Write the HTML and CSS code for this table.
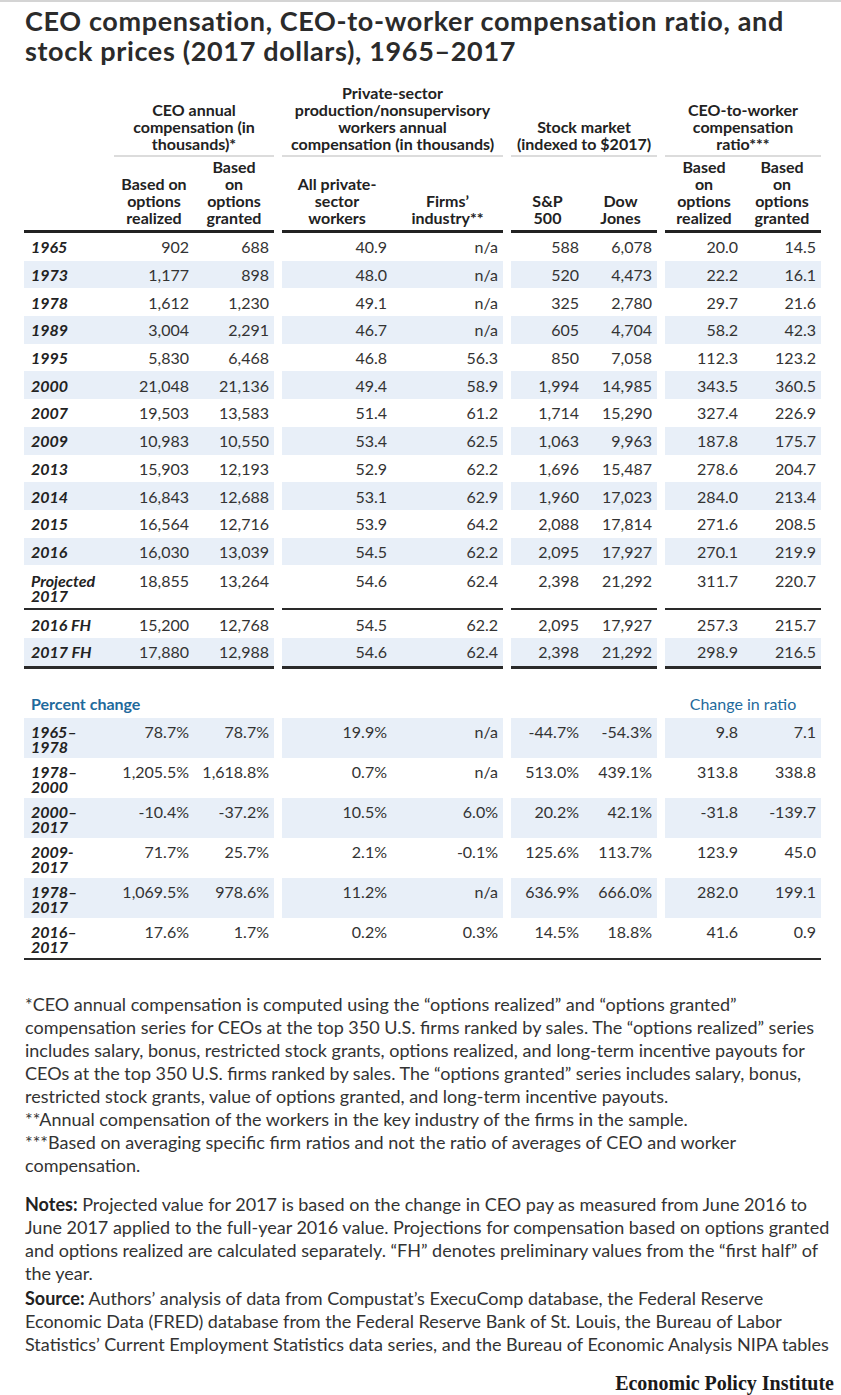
FILE: index.html
```html
<!DOCTYPE html>
<html lang="en">
<head>
<meta charset="utf-8">
<title>CEO compensation</title>
<link rel="stylesheet" href="styles.css">
</head>
<body>
<div class="page">
  <h1 class="title">CEO compensation, CEO-to-worker compensation ratio, and stock prices (2017 dollars), 1965–2017</h1>

  <table class="data">
    <colgroup>
      <col class="c-year"><col class="c-g1"><col class="c-g1">
      <col class="c-sp"><col class="c-g2a"><col class="c-g2b">
      <col class="c-sp"><col class="c-g3"><col class="c-g3">
      <col class="c-sp"><col class="c-g4"><col class="c-g4">
    </colgroup>
    <thead>
      <tr class="grp">
        <th class="blank"></th>
        <th colspan="2">CEO annual<br>compensation (in<br>thousands)*</th>
        <th class="sp"></th>
        <th colspan="2">Private-sector<br>production/nonsupervisory<br>workers annual<br>compensation (in thousands)</th>
        <th class="sp"></th>
        <th colspan="2">Stock market<br>(indexed to $2017)</th>
        <th class="sp"></th>
        <th colspan="2">CEO-to-worker<br>compensation<br>ratio***</th>
      </tr>
      <tr class="sub">
        <th></th>
        <th>Based on<br>options<br>realized</th>
        <th>Based<br>on<br>options<br>granted</th>
        <th class="sp"></th>
        <th>All private-<br>sector<br>workers</th>
        <th>Firms’<br>industry**</th>
        <th class="sp"></th>
        <th>S&amp;P<br>500</th>
        <th>Dow<br>Jones</th>
        <th class="sp"></th>
        <th>Based<br>on<br>options<br>realized</th>
        <th>Based<br>on<br>options<br>granted</th>
      </tr>
    </thead>
    <tbody class="main">
      <tr><td class="yr">1965</td><td>902</td><td>688</td><td class="sp"></td><td>40.9</td><td>n/a</td><td class="sp"></td><td>588</td><td>6,078</td><td class="sp"></td><td>20.0</td><td>14.5</td></tr>
      <tr class="alt"><td class="yr">1973</td><td>1,177</td><td>898</td><td class="sp"></td><td>48.0</td><td>n/a</td><td class="sp"></td><td>520</td><td>4,473</td><td class="sp"></td><td>22.2</td><td>16.1</td></tr>
      <tr><td class="yr">1978</td><td>1,612</td><td>1,230</td><td class="sp"></td><td>49.1</td><td>n/a</td><td class="sp"></td><td>325</td><td>2,780</td><td class="sp"></td><td>29.7</td><td>21.6</td></tr>
      <tr class="alt"><td class="yr">1989</td><td>3,004</td><td>2,291</td><td class="sp"></td><td>46.7</td><td>n/a</td><td class="sp"></td><td>605</td><td>4,704</td><td class="sp"></td><td>58.2</td><td>42.3</td></tr>
      <tr><td class="yr">1995</td><td>5,830</td><td>6,468</td><td class="sp"></td><td>46.8</td><td>56.3</td><td class="sp"></td><td>850</td><td>7,058</td><td class="sp"></td><td>112.3</td><td>123.2</td></tr>
      <tr class="alt"><td class="yr">2000</td><td>21,048</td><td>21,136</td><td class="sp"></td><td>49.4</td><td>58.9</td><td class="sp"></td><td>1,994</td><td>14,985</td><td class="sp"></td><td>343.5</td><td>360.5</td></tr>
      <tr><td class="yr">2007</td><td>19,503</td><td>13,583</td><td class="sp"></td><td>51.4</td><td>61.2</td><td class="sp"></td><td>1,714</td><td>15,290</td><td class="sp"></td><td>327.4</td><td>226.9</td></tr>
      <tr class="alt"><td class="yr">2009</td><td>10,983</td><td>10,550</td><td class="sp"></td><td>53.4</td><td>62.5</td><td class="sp"></td><td>1,063</td><td>9,963</td><td class="sp"></td><td>187.8</td><td>175.7</td></tr>
      <tr><td class="yr">2013</td><td>15,903</td><td>12,193</td><td class="sp"></td><td>52.9</td><td>62.2</td><td class="sp"></td><td>1,696</td><td>15,487</td><td class="sp"></td><td>278.6</td><td>204.7</td></tr>
      <tr class="alt"><td class="yr">2014</td><td>16,843</td><td>12,688</td><td class="sp"></td><td>53.1</td><td>62.9</td><td class="sp"></td><td>1,960</td><td>17,023</td><td class="sp"></td><td>284.0</td><td>213.4</td></tr>
      <tr><td class="yr">2015</td><td>16,564</td><td>12,716</td><td class="sp"></td><td>53.9</td><td>64.2</td><td class="sp"></td><td>2,088</td><td>17,814</td><td class="sp"></td><td>271.6</td><td>208.5</td></tr>
      <tr class="alt"><td class="yr">2016</td><td>16,030</td><td>13,039</td><td class="sp"></td><td>54.5</td><td>62.2</td><td class="sp"></td><td>2,095</td><td>17,927</td><td class="sp"></td><td>270.1</td><td>219.9</td></tr>
      <tr class="proj"><td class="yr">Projected<br>2017</td><td>18,855</td><td>13,264</td><td class="sp"></td><td>54.6</td><td>62.4</td><td class="sp"></td><td>2,398</td><td>21,292</td><td class="sp"></td><td>311.7</td><td>220.7</td></tr>
    </tbody>
    <tbody class="fh">
      <tr><td class="yr">2016 FH</td><td>15,200</td><td>12,768</td><td class="sp"></td><td>54.5</td><td>62.2</td><td class="sp"></td><td>2,095</td><td>17,927</td><td class="sp"></td><td>257.3</td><td>215.7</td></tr>
      <tr class="alt last"><td class="yr">2017 FH</td><td>17,880</td><td>12,988</td><td class="sp"></td><td>54.6</td><td>62.4</td><td class="sp"></td><td>2,398</td><td>21,292</td><td class="sp"></td><td>298.9</td><td>216.5</td></tr>
    </tbody>
    <tbody class="pct">
      <tr class="label-row">
        <td colspan="3" class="sec-label">Percent change</td>
        <td class="sp"></td><td colspan="2"></td><td class="sp"></td><td colspan="2"></td><td class="sp"></td>
        <td colspan="2" class="sec-label-r">Change in ratio</td>
      </tr>
      <tr class="alt"><td class="yr">1965–<br>1978</td><td>78.7%</td><td>78.7%</td><td class="sp"></td><td>19.9%</td><td>n/a</td><td class="sp"></td><td>-44.7%</td><td>-54.3%</td><td class="sp"></td><td>9.8</td><td>7.1</td></tr>
      <tr><td class="yr">1978–<br>2000</td><td>1,205.5%</td><td>1,618.8%</td><td class="sp"></td><td>0.7%</td><td>n/a</td><td class="sp"></td><td>513.0%</td><td>439.1%</td><td class="sp"></td><td>313.8</td><td>338.8</td></tr>
      <tr class="alt"><td class="yr">2000–<br>2017</td><td>-10.4%</td><td>-37.2%</td><td class="sp"></td><td>10.5%</td><td>6.0%</td><td class="sp"></td><td>20.2%</td><td>42.1%</td><td class="sp"></td><td>-31.8</td><td>-139.7</td></tr>
      <tr><td class="yr">2009-<br>2017</td><td>71.7%</td><td>25.7%</td><td class="sp"></td><td>2.1%</td><td>-0.1%</td><td class="sp"></td><td>125.6%</td><td>113.7%</td><td class="sp"></td><td>123.9</td><td>45.0</td></tr>
      <tr class="alt"><td class="yr">1978–<br>2017</td><td>1,069.5%</td><td>978.6%</td><td class="sp"></td><td>11.2%</td><td>n/a</td><td class="sp"></td><td>636.9%</td><td>666.0%</td><td class="sp"></td><td>282.0</td><td>199.1</td></tr>
      <tr class="last"><td class="yr">2016–<br>2017</td><td>17.6%</td><td>1.7%</td><td class="sp"></td><td>0.2%</td><td>0.3%</td><td class="sp"></td><td>14.5%</td><td>18.8%</td><td class="sp"></td><td>41.6</td><td>0.9</td></tr>
    </tbody>
  </table>

  <div class="notes">
    <p class="fn">*CEO annual compensation is computed using the “options realized” and “options granted” compensation series for CEOs at the top 350 U.S. firms ranked by sales. The “options realized” series includes salary, bonus, restricted stock grants, options realized, and long-term incentive payouts for CEOs at the top 350 U.S. firms ranked by sales. The “options granted” series includes salary, bonus, restricted stock grants, value of options granted, and long-term incentive payouts.<br>**Annual compensation of the workers in the key industry of the firms in the sample.<br>***Based on averaging specific firm ratios and not the ratio of averages of CEO and worker compensation.</p>
    <p class="nt"><strong>Notes:</strong> Projected value for 2017 is based on the change in CEO pay as measured from June 2016 to June 2017 applied to the full-year 2016 value. Projections for compensation based on options granted and options realized are calculated separately. “FH” denotes preliminary values from the “first half” of the year.</p>
    <p class="src"><strong>Source:</strong> Authors’ analysis of data from Compustat’s ExecuComp database, the Federal Reserve Economic Data (FRED) database from the Federal Reserve Bank of St. Louis, the Bureau of Labor Statistics’ Current Employment Statistics data series, and the Bureau of Economic Analysis NIPA tables</p>
  </div>

  <div class="brand">Economic Policy Institute</div>
</div>
</body>
</html>
```

FILE: styles.css
```css
html, body {
  margin: 0;
  padding: 0;
  background: #ffffff;
}

.page {
  width: 841px;
  min-height: 1395px;
  box-sizing: border-box;
  border-top: 2px solid #d4d4d4;
  font-family: Lato, "Liberation Sans", sans-serif;
  color: #333333;
}

.title {
  margin: 4px 0 0 25px;
  width: 800px;
  font-size: 27px;
  line-height: 30px;
  letter-spacing: 0.65px;
  font-weight: 700;
  color: #2b2b2b;
}

.data {
  margin: 18px 0 0 24px;
  width: 797px;
  table-layout: fixed;
  border-collapse: collapse;
  font-size: 16px;
  color: #333333;
}

.c-year { width: 90px; }
.c-g1 { width: 80px; }
.c-sp { width: 8px; }
.c-g2a { width: 110px; }
.c-g2b { width: 111px; }
.c-g3 { width: 73px; }
.c-g4 { width: 78px; }

.data th {
  font-size: 16px;
  font-weight: 700;
  color: #222222;
  line-height: 17px;
  text-align: center;
  vertical-align: bottom;
  padding: 0;
  white-space: nowrap;
}

.grp th {
  padding-bottom: 3px;
  border-bottom: 2px solid #dcdcdc;
}

.grp th.blank,
.grp th.sp {
  border-bottom: none;
}

.sub th {
  padding-top: 1px;
  padding-bottom: 4px;
  border-bottom: 3px solid #222222;
}

.data .sp {
  border: none;
  background: #ffffff;
  padding: 0;
}

.data td {
  height: 27.7px;
  padding: 0 5px 0 0;
  text-align: right;
  vertical-align: middle;
  line-height: 17px;
  white-space: nowrap;
}

.data td.yr {
  text-align: left;
  padding-left: 7px;
  font-weight: 700;
  font-style: italic;
  color: #222222;
}

.data tr.alt td { background: #e8eff8; }
.data tr.alt td.sp { background: #ffffff; }

.main tr.proj td {
  height: auto;
  vertical-align: top;
  padding-top: 8px;
  padding-bottom: 5px;
  line-height: 15px;
  border-bottom: 2px solid #2a2a2a;
}

.fh tr.last td {
  border-bottom: 3px solid #2a2a2a;
}

.data tr td.sp { border-bottom: none; }

.pct tr td {
  height: auto;
  vertical-align: top;
  padding-top: 6px;
  padding-bottom: 4px;
  line-height: 15px;
}

.pct tr.label-row td {
  height: auto;
  vertical-align: bottom;
  padding-top: 26px;
  padding-bottom: 6px;
  line-height: 17px;
  background: #ffffff;
  border: none;
}

.sec-label {
  text-align: left !important;
  padding-left: 7px !important;
  font-weight: 700;
  color: #1f6a9c;
}

.sec-label-r {
  text-align: center !important;
  padding-right: 0 !important;
  color: #1f6a9c;
}

.pct tr.last td {
  border-bottom: 2px solid #2a2a2a;
}

.notes {
  margin: 33px 0 0 25px;
  width: 808px;
  font-size: 18px;
  line-height: 23px;
  color: #333333;
}

.notes p {
  margin: 0;
}

.notes .fn { margin-bottom: 16px; }
.notes .nt { margin-bottom: 2px; }

.notes strong {
  font-weight: 700;
  color: #222222;
}

.brand {
  margin-top: 15px;
  padding-right: 7px;
  text-align: right;
  font-family: "Liberation Serif", "DejaVu Serif", serif;
  font-weight: 700;
  font-size: 20px;
  line-height: 24px;
  color: #1a1a1a;
}
```
